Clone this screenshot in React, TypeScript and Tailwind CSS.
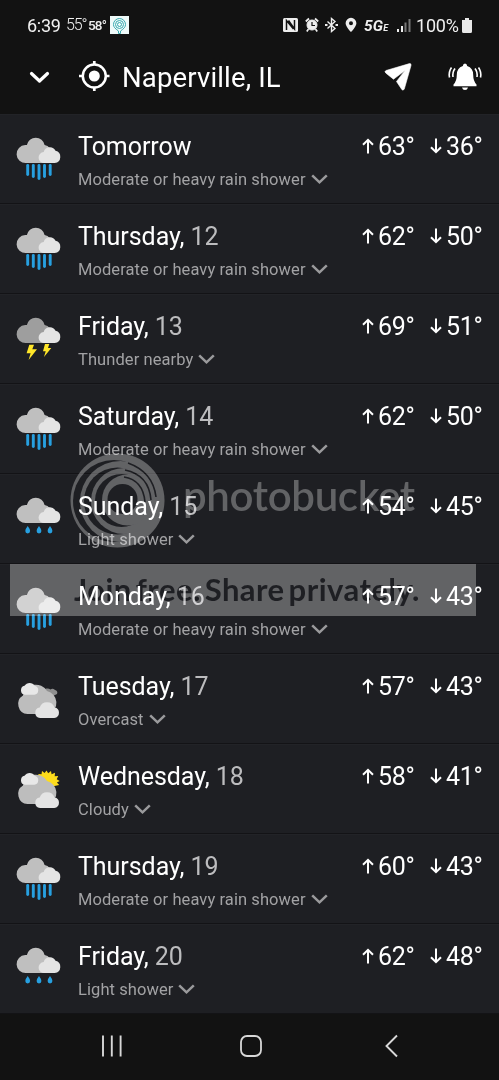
import React from 'react';

type Kind = 'heavy' | 'thunder' | 'light' | 'overcast' | 'cloudy';

const DAYS: { day: string; date?: string; kind: Kind; text: string; high: number; low: number }[] = [
  { day: 'Tomorrow', kind: 'heavy', text: 'Moderate or heavy rain shower', high: 63, low: 36 },
  { day: 'Thursday,', date: '12', kind: 'heavy', text: 'Moderate or heavy rain shower', high: 62, low: 50 },
  { day: 'Friday,', date: '13', kind: 'thunder', text: 'Thunder nearby', high: 69, low: 51 },
  { day: 'Saturday,', date: '14', kind: 'heavy', text: 'Moderate or heavy rain shower', high: 62, low: 50 },
  { day: 'Sunday,', date: '15', kind: 'light', text: 'Light shower', high: 54, low: 45 },
  { day: 'Monday,', date: '16', kind: 'heavy', text: 'Moderate or heavy rain shower', high: 57, low: 43 },
  { day: 'Tuesday,', date: '17', kind: 'overcast', text: 'Overcast', high: 57, low: 43 },
  { day: 'Wednesday,', date: '18', kind: 'cloudy', text: 'Cloudy', high: 58, low: 41 },
  { day: 'Thursday,', date: '19', kind: 'heavy', text: 'Moderate or heavy rain shower', high: 60, low: 43 },
  { day: 'Friday,', date: '20', kind: 'light', text: 'Light shower', high: 62, low: 48 },
];

const RAIN = [
  [12.7, 40.5],
  [18.3, 42.5],
  [24, 44.5],
  [29.5, 42.5],
  [35.2, 40.5],
];

function RainCloud({ dark }: { dark?: boolean }) {
  return (
    <>
      <path
        d="M11 29a9 9 0 0 1-.8-18h1.7a9 9 0 0 1 17.7 0A9.2 9.2 0 0 1 37 20v9Z"
        fill={dark ? '#9e9e9e' : '#bfbfbf'}
      />
      <path d="M29.5 29a5.5 5.5 0 0 1-.8-11 6.3 6.3 0 0 1 11.8-1.2A6.2 6.2 0 0 1 39.8 29Z" fill="#e4e4e4" />
    </>
  );
}

function CloudPile({ sun }: { sun?: boolean }) {
  return (
    <>
      {sun ? (
        <path
          d="m31.500 6.500 1.700 2.700 2.800-2.200.6 3.200 3.400-1.400-.3 3.400 3.500-.2-1.500 3.200 3 1.700-2.800 1.600 2.300 2.500L30 24 23 13l.5-3 3 .3.500-3.300 2.600 2Z"
          fill="#fddc1c"
        />
      ) : (
        <path d="M28 17a5 5 0 0 1 7.500-1.500 3 3 0 0 1 4.500.5 2.700 2.700 0 0 1 2 4L34 24Z" fill="#8f8f8f" />
      )}
      <path
        d="M12.500 40A10 10 0 0 1 8 21.500 13 13 0 0 1 32 17a12 12 0 0 1 1.500 23Z"
        fill="#bdbdbd"
      />
      <path d="M9.800 20.800a4.600 4.600 0 0 1-.3-9 6 6 0 0 1 10.300 0 4.600 4.600 0 0 1-.5 9Z" fill="#e8e8e8" />
      <path d="M25 44a5.300 5.300 0 0 1-.3-10.500 7.800 7.800 0 0 1 14.800 0A5.300 5.300 0 0 1 39.300 44Z" fill="#e4e4e4" />
    </>
  );
}

function WeatherIcon({ kind }: { kind: Kind }) {
  return (
    <svg className="mt-[19px] ml-[15px] h-12 w-12 shrink-0" viewBox="0 0 48 48">
      {kind === 'overcast' && <CloudPile />}
      {kind === 'cloudy' && <CloudPile sun />}
      {(kind === 'heavy' || kind === 'light') && <RainCloud />}
      {kind === 'thunder' && <RainCloud dark />}
      {kind === 'heavy' &&
        RAIN.map(([x, y]) => (
          <path key={x} d={`M${x} 31.500V${y}`} stroke="#27a0e0" strokeWidth="2.900" strokeLinecap="round" />
        ))}
      {kind === 'light' &&
        [12.7, 24, 35].map((x) => (
          <path key={x} d={`M${x} 32q2.400 3 2.400 5a2.400 2.400 0 0 1-4.800 0q0-2 2.400-5`} fill="#27a0e0" />
        ))}
      {kind === 'thunder' && (
        <g fill="#ffe629">
          <path d="M14.300 30.700h4.700l-1.700 4.600H22L13.600 46l2-6.700h-4Z" />
          <path d="M30 30h4.300L33 34h3.300L29 43l1.700-5.700H28Z" />
        </g>
      )}
    </svg>
  );
}

function Arrow({ down }: { down?: boolean }) {
  return (
    <svg
      className={`mt-[23px] h-[16px] w-[12px] ${down ? 'rotate-180' : ''}`}
      viewBox="0 0 12 16"
      fill="none"
      stroke="#fff"
      strokeWidth="2"
    >
      <path d="M6 15.500V2M1 6.800l5-5 5 5" />
    </svg>
  );
}

function Temp({ value, down }: { value: number; down?: boolean }) {
  return (
    <div className="flex w-[68px]">
      <Arrow down={down} />
      <span className="mt-[14px] ml-[4px] text-[25px] leading-9 tracking-[-0.3px]">{value}°</span>
    </div>
  );
}

function StatusBar() {
  return (
    <div className="flex h-[50px] items-center pl-[27px] text-[#f0f0f0]">
      <span className="w-[39px] text-[18px] tracking-[-0.3px]">6:39</span>
      <span className="w-[22px] text-[16px] font-light tracking-[-1.100px]">55°</span>
      <span className="w-[22px] text-[13.500px] font-medium tracking-[-0.800px]">58°</span>
      <svg className="h-[18px] w-[19px] bg-[#effafa]" viewBox="0 0 19 18" fill="none" stroke="#39aab0" strokeWidth="1">
        <path d="M8.500 15C5 12.500 3.500 11 3.500 8.500a6 6 0 0 1 12 0c0 2.500-1.500 4-5 6.500v2.500h-2Z" />
        <circle cx="9.500" cy="8.500" r="4" />
        <circle cx="9.500" cy="8.500" r="2" />
      </svg>

      <svg className="ml-[154px] h-[16px] w-[15px]" viewBox="0 0 15 16">
        <rect x="0" y="1" width="15" height="14" rx="1.500" fill="#eee" />
        <path d="M3.500 13V3.500L10.500 12M5.500 3.500 11.500 12V3" stroke="#121212" strokeWidth="1.500" fill="none" />
      </svg>
      <svg className="ml-[7px] h-[16px] w-[14px]" viewBox="0 0 14 16" fill="none" stroke="#eee">
        <circle cx="7" cy="8" r="5" fill="#eee" />
        <path d="M.8 4.500 4 1.500M13.200 4.500 10 1.500" strokeWidth="1.800" />
        <path d="m3.500 12-1.700 2.500M10.500 12l1.700 2.500" strokeWidth="1.700" />
        <path d="M7 5v3.500h3" stroke="#121212" strokeWidth="1.200" />
      </svg>
      <svg className="ml-[6px] h-[16px] w-[13px]" viewBox="0 0 13 16" fill="none" stroke="#eee" strokeWidth="1.400">
        <path d="m2.500 4.500 7.500 7-3.500 3v-13l3.500 3-7.500 7" />
        <path d="M0 8h2.500M10.500 8H13" strokeWidth="2" />
      </svg>
      <svg className="ml-[7px] h-[16px] w-[12px]" viewBox="0 0 12 16">
        <path
          d="M6 .8a5.400 5.400 0 0 0-5.400 5.400C.6 9.500 6 15 6 15s5.400-5.500 5.400-8.800A5.400 5.400 0 0 0 6 .8Zm0 3.400a2 2 0 1 1 0 4 2 2 0 0 1 0-4Z"
          fill="#eee"
        />
      </svg>
      <span className="mt-[4px] ml-[7px] flex w-[28px] items-baseline font-bold italic">
        <span className="text-[15.500px] leading-4 tracking-[0.2px]">5G</span>
        <span className="text-[9px] leading-4">E</span>
      </span>
      <svg className="ml-[5px] h-[14px] w-[14px]" viewBox="0 0 14 14">
        <path d="M0 14v-3h2v3ZM4 14V8h2v6Z" fill="#eee" />
        <path d="M7.500 14V4.500h2V14ZM11.500 14V1h2v13Z" fill="#777" />
      </svg>
      <span className="ml-[5px] w-[46px] text-[18px] tracking-[-0.2px]">100%</span>
      <svg className="h-[15px] w-[10px]" viewBox="0 0 10 15">
        <path d="M3 0h4v2h3v11.500Q10 15 8.500 15h-7Q0 15 0 13.500V2h3Z" fill="#e8e8e8" />
      </svg>
    </div>
  );
}

function Header() {
  return (
    <div className="flex h-[65px] items-start">
      <svg className="mt-[20px] ml-[29px] h-[14px] w-[21px]" viewBox="0 0 21 14" fill="none">
        <path d="m2.500 3.500 8 7.500 8-7.500" stroke="#fff" strokeWidth="3.200" strokeLinecap="round" strokeLinejoin="round" />
      </svg>
      <svg className="mt-[10px] ml-[28px] h-[32px] w-[32px]" viewBox="0 0 32 32" fill="none" stroke="#fff">
        <circle cx="16.300" cy="16" r="11.500" strokeWidth="2.500" />
        <circle cx="16.300" cy="16" r="5.500" fill="#fff" stroke="none" />
        <path d="M16.300 1v4M16.300 27v4M1 16h4M27.500 16h4" strokeWidth="2.700" />
      </svg>
      <h1 className="mt-[10px] ml-[12px] w-[240px] text-[27.500px] leading-9 tracking-[0.150px]">Naperville, IL</h1>
      <svg className="mt-[12px] ml-[21px] h-[30px] w-[30px] shrink-0" viewBox="0 0 30 30">
        <path
          d="M28 3.500Q28.500 1.300 26.500 1.600L3 8.500q-2 1 0 2.700l7.500 6L22 8.500 13.500 19.500l5.300 8q1.500 1.500 2.500-.5Z"
          fill="#fff"
          stroke="#fff"
          strokeWidth=".6"
        />
      </svg>
      <svg className="mt-[12px] ml-[34px] h-[30px] w-[36px] shrink-0" viewBox="0 0 36 30">
        <path
          d="M18 1.500q2 0 2.200 2.500 6 1.800 6 9 0 6 3.300 9.500v1.700h-23v-1.700q3.300-3.500 3.300-9.500 0-7.200 6-9 .2-2.500 2.200-2.500M15 25.500h6q-.6 2.500-3 2.500t-3-2.500Z"
          fill="#fff"
        />
        <path
          d="M8 6.500Q5.300 10 6 15M4.500 5.500Q1.300 10 2.500 15.500M28 6.500q2.700 3.500 2 8.500M31.500 5.500q3.200 4.500 2 10"
          fill="none"
          stroke="#fff"
          strokeWidth="1.600"
        />
      </svg>
    </div>
  );
}

function Watermark() {
  return (
    <div className="pointer-events-none absolute top-[453px] left-[10px] h-[163px] w-[466px] mix-blend-screen">
      <div className="flex h-[111px] pl-[60px]">
        <svg className="h-[95px] w-[96px]" viewBox="70 453 96 95">
          <circle cx="117.500" cy="500.500" r="47" fill="#4d4d4d" />
          <circle cx="114" cy="501" r="41" fill="#000" />
          <circle cx="120.500" cy="501.500" r="40.500" fill="#4d4d4d" />
          <circle cx="117.500" cy="501" r="33.500" fill="#000" />
          <circle cx="124" cy="501" r="33" fill="#4d4d4d" />
          <circle cx="121.500" cy="500.500" r="26.500" fill="#000" />
          <circle cx="127.500" cy="500" r="25.500" fill="#4d4d4d" />
          <circle cx="122.500" cy="499" r="15" fill="#000" />
          <path
            d="M124 477q19 3 21 25M125 470q24 5 26 30M128 463q25 9 28 34"
            stroke="#000"
            strokeWidth="1.600"
            fill="none"
          />
        </svg>
        <span className="mt-[16px] ml-[17px] font-['Lato'] text-[42px] leading-[52px] font-semibold tracking-[-0.350px] text-[#4d4d4d]">
          photobucket
        </span>
      </div>
      <div className="h-[52px] bg-[#4d4d4d] pl-[64px] font-['Lato'] text-[31px] leading-[50px] font-bold tracking-[0.450px] [word-spacing:-4px] whitespace-nowrap text-black">
        Join free. Share privately.
      </div>
    </div>
  );
}

export default function App() {
  return (
    <div className="relative isolate flex h-[1080px] w-[499px] flex-col overflow-hidden bg-[#121212] font-['Roboto',sans-serif] text-white">
      <StatusBar />
      <Header />
      <main className="-mt-px bg-[#1e1f23]">
        {DAYS.map((d) => (
          <div key={d.day + d.date} className="flex h-[90px] border-t border-[#222327] shadow-[inset_0_-1px_#131316]">
            <WeatherIcon kind={d.kind} />
            <div className="ml-[15px] flex-1 pt-[14px]">
              <div className="text-[25px] leading-9 tracking-[-0.050px]">
                {d.day} <span className="text-[#bcbcbe]">{d.date}</span>
              </div>
              <div className="mt-[3px] flex items-center text-[16.500px] leading-6 tracking-[0.080px] text-[#a2a2a4]">
                <span className="whitespace-nowrap">{d.text}</span>
                <svg className="mb-[2px] ml-[5px] h-[11px] w-[17px]" viewBox="0 0 17 11" fill="none">
                  <path d="m1.200 1.300 7.300 7 7.300-7" stroke="#9a9a9c" strokeWidth="2.500" />
                </svg>
              </div>
            </div>
            <div className="flex w-[137px]">
              <Temp value={d.high} />
              <Temp value={d.low} down />
            </div>
          </div>
        ))}
      </main>
      <nav className="flex flex-1 items-center pb-[3px]">
        <svg className="ml-[101px] h-[22px] w-[22px]" viewBox="0 0 22 22">
          <path d="M2 .5v21M10.800.5v21M19.600.5v21" stroke="#d8d8d8" strokeWidth="1.900" />
        </svg>
        <svg className="ml-[117px] h-[22px] w-[22px]" viewBox="0 0 22 22">
          <rect x="1" y="1" width="20" height="20" rx="6" fill="none" stroke="#d8d8d8" strokeWidth="1.800" />
        </svg>
        <svg className="ml-[122px] h-[24px] w-[16px]" viewBox="0 0 16 24">
          <path d="M13 1.500 2.500 12 13 22.500" fill="none" stroke="#d8d8d8" strokeWidth="1.900" />
        </svg>
      </nav>
      <Watermark />
    </div>
  );
}
